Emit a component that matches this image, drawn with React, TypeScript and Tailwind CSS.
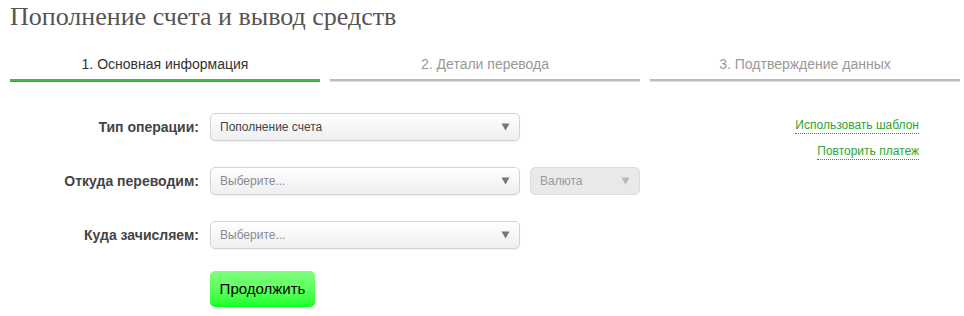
import React from "react";

const Arrow = ({ color }: { color: string }) => (
  <svg width="9" height="8" viewBox="0 0 9 8" className="shrink-0">
    <path d="M0.5 0.5 L8.5 0.5 L4.5 7.5 Z" fill={color} />
  </svg>
);

function Select({ text, placeholder }: { text: string; placeholder?: boolean }) {
  return (
    <div className="flex h-[28px] w-[310px] items-center justify-between rounded-[5px] border border-[#d3d3d3] bg-gradient-to-b from-white to-[#eeeff1] pl-[9px] pr-[9px] shadow-[0_1px_1px_rgba(0,0,0,0.06)]">
      <span className={placeholder ? "text-[12px] text-[#8a8a8a]" : "text-[12px] text-[#444]"}>{text}</span>
      <Arrow color="#777" />
    </div>
  );
}

function Row({ label, children }: { label: string; children: React.ReactNode }) {
  return (
    <div className="flex items-center">
      <div className="w-[200px] pr-[11px] text-right text-[14px] font-bold text-[#444]">{label}</div>
      {children}
    </div>
  );
}

export default function App() {
  return (
    <div className="h-[316px] w-[964px] bg-white pl-[10px] pr-[4px]" style={{ fontFamily: '"Liberation Sans", Arial, sans-serif' }}>
      <h1 className="pt-[2px] text-[26px] leading-[30px] text-[#555]" style={{ fontFamily: '"Liberation Serif", "Times New Roman", serif' }}>
        Пополнение счета и вывод средств
      </h1>
      <div className="mt-[21px] flex gap-[10px]">
        <div className="w-[310px]">
          <div className="h-[26px] text-center text-[14px] leading-[22px] text-[#333]">1. Основная информация</div>
          <div className="h-[3px] bg-[#3cb94a] border-b border-[#2fa83c]" />
        </div>
        <div className="w-[310px]">
          <div className="h-[26px] text-center text-[14px] leading-[22px] text-[#999]">2. Детали перевода</div>
          <div className="h-[3px] border-b border-[#e0e0e0] bg-[#bdbdbd]" />
        </div>
        <div className="w-[310px]">
          <div className="h-[26px] text-center text-[14px] leading-[22px] text-[#999]">3. Подтверждение данных</div>
          <div className="h-[3px] border-b border-[#e0e0e0] bg-[#bdbdbd]" />
        </div>
      </div>
      <div className="mt-[31px] flex">
        <div className="flex flex-col gap-[26px]">
          <Row label="Тип операции:">
            <Select text="Пополнение счета" />
          </Row>
          <Row label="Откуда переводим:">
            <Select text="Выберите..." placeholder />
            <div className="ml-[10px] flex h-[28px] w-[110px] items-center justify-between rounded-[5px] border border-[#dcdcdc] bg-[#e8e9e9] pl-[9px] pr-[9px]">
              <span className="text-[12px] text-[#9a9a9a]">Валюта</span>
              <Arrow color="#b8b8b8" />
            </div>
          </Row>
          <Row label="Куда зачисляем:">
            <Select text="Выберите..." placeholder />
          </Row>
          <div className="-mt-[4px] pl-[200px]">
            <button className="h-[36px] w-[105px] rounded-[5px] bg-gradient-to-b from-[#80ff80] to-[#00ff22] text-[15px] text-black">
              Продолжить
            </button>
          </div>
        </div>
        <div className="ml-auto flex flex-col items-end gap-[10px] pr-[41px] pt-[5px]">
          <span className="border-b border-dotted border-[#1ea01e] text-[12px] leading-[15px] text-[#2ea52e]">Использовать шаблон</span>
          <span className="border-b border-dotted border-[#1ea01e] text-[12px] leading-[15px] text-[#2ea52e]">Повторить платеж</span>
        </div>
      </div>
    </div>
  );
}
